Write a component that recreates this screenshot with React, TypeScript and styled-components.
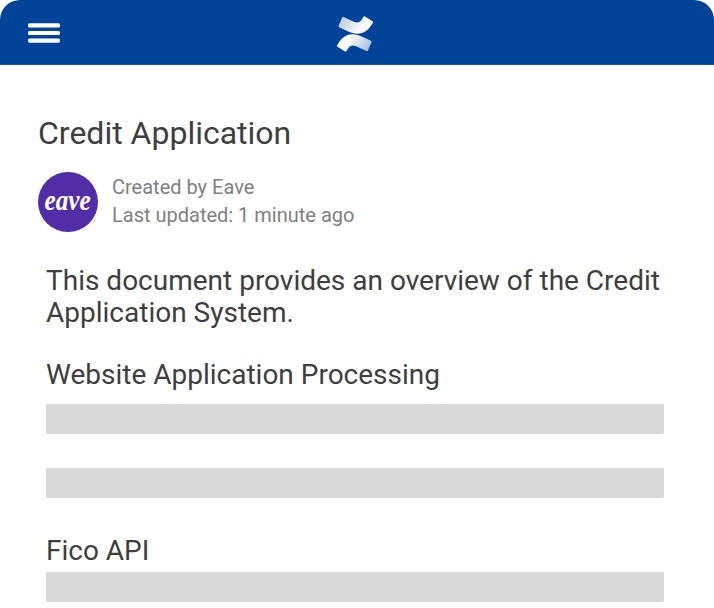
import React from "react";
import styled, { createGlobalStyle } from "styled-components";

const GlobalStyle = createGlobalStyle`
  *, *::before, *::after { box-sizing: border-box; }
  body { margin: 0; background: #fff; font-family: Roboto, sans-serif; color: #3e3e3e; }
  h1, h2, p { margin: 0; font-weight: 400; }
`;

const Page = styled.div`
  height: 608px;
  overflow: hidden;
`;

const TopBar = styled.header`
  display: grid;
  grid-template-columns: 1fr 36px 1fr;
  align-items: start;
  height: 65px;
  padding: 0 32px 0 28px;
  background: #004499;
  border-bottom: 1px solid #16539f;
  border-radius: 20px 20px 0 0;
`;

const MenuButton = styled.button`
  display: block;
  width: 32px;
  height: 20px;
  margin: 23px 0 0;
  padding: 0;
  border: 0;
  background: none;
`;

const Logo = styled.svg`
  display: block;
  width: 36px;
  height: 36px;
  margin: 16px 0 0;
`;

const Content = styled.main`
  padding: 49px 38px 0;
`;

const Title = styled.h1`
  font-size: 32px;
  line-height: 38px;
`;

const Byline = styled.div`
  display: flex;
  gap: 14px;
  margin-top: 20px;
`;

const Avatar = styled.div`
  display: flex;
  justify-content: center;
  width: 60px;
  height: 60px;
  border-radius: 50%;
  background: #512da8;
  color: #fff;
`;

const Wordmark = styled.span`
  font: italic 700 29px/57px "Liberation Serif", serif;
  transform: scaleX(0.87);
`;

const Meta = styled.p`
  padding-top: 1px;
  font-size: 20px;
  line-height: 28px;
  color: #808080;
`;

const Document = styled.article`
  width: 634px;
  padding: 33px 8px 0;
`;

const bodyText = `
  font-size: 28px;
  line-height: 32px;
`;

const Overview = styled.p`
  ${bodyText}
  white-space: nowrap;
`;

const Section = styled.section<{ $gap: number }>`
  margin-top: ${(p) => p.$gap}px;
`;

const Heading = styled.h2<{ $space: number }>`
  ${bodyText}
  margin-bottom: ${(p) => p.$space}px;
`;

const Placeholder = styled.div`
  height: 30px;
  border-radius: 2px;
  background: #d9d9d9;

  & + & { margin-top: 34px; }
`;

export default function App() {
  return (
    <Page>
      <GlobalStyle />
      <TopBar>
        <MenuButton aria-label="Menu">
          <svg width="32" height="20" viewBox="0 0 32 20" fill="#fff">
            <rect y="0.3" width="32" height="4.2" rx="1.6" />
            <rect y="7.9" width="32" height="4.2" rx="1.6" />
            <rect y="15.5" width="32" height="4.2" rx="1.6" />
          </svg>
        </MenuButton>
        <Logo viewBox="0 0 24 24" aria-label="Confluence">
          <defs>
            <linearGradient id="lower" gradientUnits="userSpaceOnUse" x1="23" y1="23" x2="8" y2="14.5">
              <stop offset="0" stopColor="#fff" stopOpacity="0.62" />
              <stop offset="1" stopColor="#fff" />
            </linearGradient>
            <linearGradient id="upper" gradientUnits="userSpaceOnUse" x1="1" y1="1" x2="16" y2="9.5">
              <stop offset="0" stopColor="#fff" stopOpacity="0.7" />
              <stop offset="1" stopColor="#fff" />
            </linearGradient>
          </defs>
          <path
            fill="url(#lower)"
            d="M.87 18.257c-.248.382-.53.875-.763 1.245a.764.764 0 0 0 .255 1.04l4.965 3.054a.764.764 0 0 0 1.058-.26c.199-.332.454-.763.733-1.221 1.967-3.247 3.945-2.853 7.508-1.146l4.957 2.337a.764.764 0 0 0 1.028-.382l2.364-5.346a.764.764 0 0 0-.382-1 599.851 599.851 0 0 1-4.965-2.361C10.911 10.97 5.224 11.185.87 18.257z"
          />
          <path
            fill="url(#upper)"
            d="M23.131 5.743c.249-.405.531-.875.764-1.25a.764.764 0 0 0-.256-1.034L18.675.404a.764.764 0 0 0-1.058.26c-.195.335-.451.763-.734 1.225-1.966 3.246-3.945 2.85-7.508 1.146L4.437.694a.764.764 0 0 0-1.027.382L1.046 6.422a.764.764 0 0 0 .382 1c1.039.49 3.105 1.467 4.965 2.361 6.698 3.246 12.392 3.029 16.738-4.04z"
          />
        </Logo>
      </TopBar>
      <Content>
        <Title>Credit Application</Title>
        <Byline>
          <Avatar>
            <Wordmark>eave</Wordmark>
          </Avatar>
          <Meta>
            Created by Eave
            <br />
            Last updated: 1 minute ago
          </Meta>
        </Byline>
        <Document>
          <Overview>
            This document provides an overview of the Credit
            <br />
            Application System.
          </Overview>
          <Section $gap={30}>
            <Heading $space={13}>Website Application Processing</Heading>
            <Placeholder />
            <Placeholder />
          </Section>
          <Section $gap={37}>
            <Heading $space={5}>Fico API</Heading>
            <Placeholder />
          </Section>
        </Document>
      </Content>
    </Page>
  );
}
